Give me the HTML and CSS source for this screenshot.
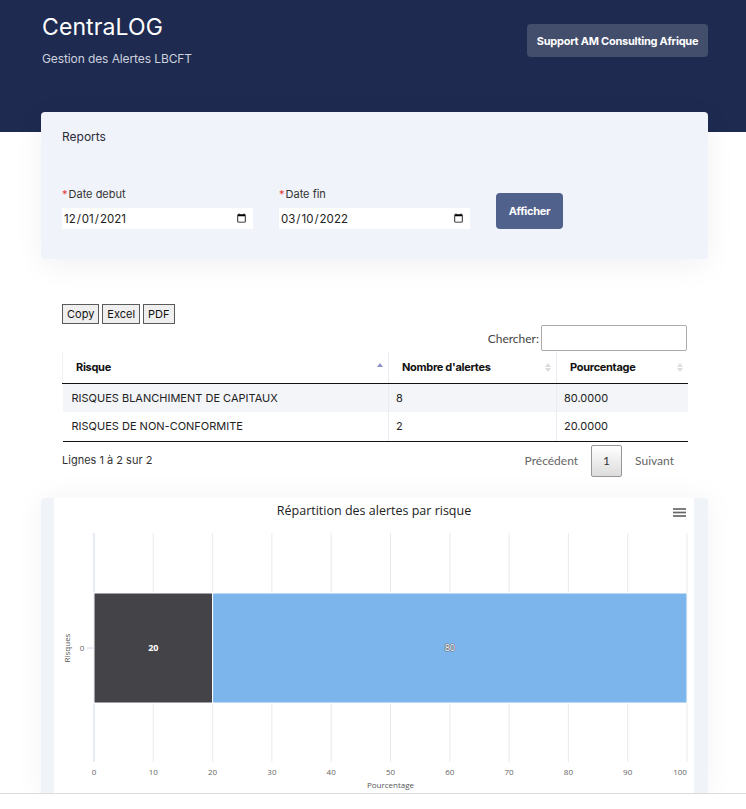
FILE: index.html
```html
<!DOCTYPE html>
<html lang="fr">
<head>
<meta charset="utf-8">
<title>CentraLOG - Reports</title>
<link rel="stylesheet" href="styles.css">
</head>
<body>
<header class="topbar">
  <div class="brand">
    <h1 class="brand-title">CentraLOG</h1>
    <p class="brand-sub">Gestion des Alertes LBCFT</p>
  </div>
  <a class="support-btn" href="#">Support AM Consulting Afrique</a>
</header>

<main class="content">
  <section class="card reports">
    <h2 class="card-title">Reports</h2>
    <form class="filter-row">
      <div class="field">
        <label class="field-label"><span class="req">*</span>Date debut</label>
        <input class="date-input" type="date" value="2021-12-01">
      </div>
      <div class="field">
        <label class="field-label"><span class="req">*</span>Date fin</label>
        <input class="date-input" type="date" value="2022-03-10">
      </div>
      <button class="btn-primary" type="button">Afficher</button>
    </form>
  </section>

  <section class="table-block">
    <div class="dt-buttons">
      <button class="dt-btn" type="button">Copy</button>
      <button class="dt-btn" type="button">Excel</button>
      <button class="dt-btn" type="button">PDF</button>
    </div>
    <div class="dt-search">
      <label class="search-label">Chercher:</label>
      <input class="search-input" type="text">
    </div>
    <table class="dt-table">
      <thead>
        <tr>
          <th class="col-risk"><span>Risque</span><span class="sort active-up"><i class="up"></i><i class="down"></i></span></th>
          <th class="col-count"><span>Nombre d'alertes</span><span class="sort"><i class="up"></i><i class="down"></i></span></th>
          <th class="col-pct"><span>Pourcentage</span><span class="sort"><i class="up"></i><i class="down"></i></span></th>
        </tr>
      </thead>
      <tbody>
        <tr class="odd">
          <td>RISQUES BLANCHIMENT DE CAPITAUX</td>
          <td>8</td>
          <td>80.0000</td>
        </tr>
        <tr>
          <td>RISQUES DE NON-CONFORMITE</td>
          <td>2</td>
          <td>20.0000</td>
        </tr>
      </tbody>
    </table>
    <div class="dt-footer">
      <div class="dt-info">Lignes 1 à 2 sur 2</div>
      <div class="dt-paging">
        <span class="page-link">Précédent</span>
        <span class="page-current">1</span>
        <span class="page-link">Suivant</span>
      </div>
    </div>
  </section>

  <section class="chart-card">
    <div class="chart-inner">
      <svg class="chart-svg" width="640" height="295" viewBox="0 0 640 295">
        <text class="c-title" x="320" y="17" text-anchor="middle">Répartition des alertes par risque</text>
        <g class="c-menu">
          <line x1="619" y1="11" x2="632" y2="11"/>
          <line x1="619" y1="14.5" x2="632" y2="14.5"/>
          <line x1="619" y1="18" x2="632" y2="18"/>
        </g>
        <g class="c-grid">
          <line x1="99.3" y1="35" x2="99.3" y2="264"/>
          <line x1="158.6" y1="35" x2="158.6" y2="264"/>
          <line x1="217.9" y1="35" x2="217.9" y2="264"/>
          <line x1="277.2" y1="35" x2="277.2" y2="264"/>
          <line x1="336.5" y1="35" x2="336.5" y2="264"/>
          <line x1="395.8" y1="35" x2="395.8" y2="264"/>
          <line x1="455.1" y1="35" x2="455.1" y2="264"/>
          <line x1="514.4" y1="35" x2="514.4" y2="264"/>
          <line x1="573.7" y1="35" x2="573.7" y2="264"/>
          <line x1="633" y1="35" x2="633" y2="264"/>
        </g>
        <line class="c-axis" x1="40" y1="35" x2="40" y2="264"/>
        <line class="c-axis" x1="33" y1="150" x2="40" y2="150"/>
        <rect class="bar-dark" x="40" y="95" width="118.6" height="110"/>
        <rect class="bar-blue" x="158.6" y="95" width="474.4" height="110"/>
        <text class="c-lbl-dark" x="99.3" y="153" text-anchor="middle">20</text>
        <text class="c-lbl-blue" x="395.8" y="153" text-anchor="middle">80</text>
        <text class="c-tick" x="28" y="153" text-anchor="middle">0</text>
        <text class="c-axis-title" transform="translate(16 150) rotate(-90)" text-anchor="middle">Risques</text>
        <g class="c-tick">
          <text x="40" y="277" text-anchor="middle">0</text>
          <text x="99.3" y="277" text-anchor="middle">10</text>
          <text x="158.6" y="277" text-anchor="middle">20</text>
          <text x="217.9" y="277" text-anchor="middle">30</text>
          <text x="277.2" y="277" text-anchor="middle">40</text>
          <text x="336.5" y="277" text-anchor="middle">50</text>
          <text x="395.8" y="277" text-anchor="middle">60</text>
          <text x="455.1" y="277" text-anchor="middle">70</text>
          <text x="514.4" y="277" text-anchor="middle">80</text>
          <text x="573.7" y="277" text-anchor="middle">90</text>
          <text x="626" y="277" text-anchor="middle">100</text>
        </g>
        <text class="c-axis-title" x="336.5" y="290" text-anchor="middle">Pourcentage</text>
      </svg>
    </div>
  </section>
</main>
<footer class="page-footer"></footer>
</body>
</html>
```

FILE: styles.css
```css
* { box-sizing: border-box; }

html, body {
  margin: 0;
  padding: 0;
  background: #ffffff;
}

body {
  font-family: Inter, "Noto Sans", Arial, sans-serif;
  color: #222;
  width: 746px;
  overflow: hidden;
}

/* Header */
.topbar {
  height: 132px;
  background: #1e2a50;
  display: flex;
  justify-content: space-between;
  align-items: flex-start;
  padding: 0 38px 0 42px;
}

.brand { padding-top: 13px; }

.brand-title {
  margin: 0;
  font-size: 23px;
  line-height: 28px;
  font-weight: 400;
  color: #ffffff;
  letter-spacing: 0.1px;
}

.brand-sub {
  margin: 10px 0 0;
  font-size: 12px;
  line-height: 16px;
  color: #cdd2de;
  letter-spacing: -0.1px;
}

.support-btn {
  margin-top: 24px;
  height: 33px;
  width: 181px;
  display: flex;
  align-items: center;
  justify-content: center;
  background: #434e6c;
  color: #ffffff;
  font-size: 11px;
  font-weight: 700;
  letter-spacing: -0.25px;
  white-space: nowrap;
  text-decoration: none;
  border-radius: 4px;
}

/* Content */
.content {
  padding: 0 38px 0 41px;
}

.card {
  background: #f0f3f9;
  border-radius: 4px;
  box-shadow: 0 6px 30px rgba(0, 0, 0, 0.06);
}

.reports {
  margin-top: -20px;
  height: 147px;
  padding: 16px 21px 0;
  position: relative;
}

.card-title {
  margin: 0;
  font-size: 12px;
  line-height: 18px;
  font-weight: 400;
  color: #2a2a3a;
}

.filter-row {
  margin: 40px 0 0;
  display: flex;
  align-items: flex-end;
  gap: 26px;
}

.field {
  width: 191px;
  display: flex;
  flex-direction: column;
  gap: 6px;
}

.field-label {
  font-size: 11px;
  line-height: 16px;
  color: #333;
}

.req {
  color: #e53935;
  margin-right: 1px;
}

.date-input {
  height: 21px;
  width: 191px;
  border: none;
  background: #ffffff;
  padding: 0 4px 0 1px;
  font-family: Inter, "Noto Sans", Arial, sans-serif;
  font-size: 11.5px;
  color: #222;
  outline: none;
}

.btn-primary {
  width: 67px;
  height: 36px;
  border: none;
  border-radius: 4px;
  background: #50628c;
  color: #ffffff;
  font-family: Inter, "Noto Sans", Arial, sans-serif;
  font-size: 11px;
  font-weight: 700;
  letter-spacing: -0.3px;
  padding: 0;
}

/* Table block */
.table-block {
  margin: 45px 21px 0 21px;
}

.dt-buttons {
  display: flex;
  gap: 3px;
  height: 19px;
}

.dt-btn {
  height: 20px;
  padding: 0 4px;
  border: 1px solid #5a5a5a;
  background: #efefef;
  font-family: Inter, "Noto Sans", Arial, sans-serif;
  font-size: 11px;
  color: #111;
  border-radius: 0;
  line-height: 18px;
}

.dt-search {
  margin-top: 2px;
  display: flex;
  justify-content: flex-end;
  align-items: center;
  gap: 2px;
  height: 26px;
}

.search-label {
  font-family: Lato, Inter, sans-serif;
  font-size: 12px;
  color: #444;
}

.search-input {
  width: 146px;
  height: 26px;
  border: 1px solid #aaaaaa;
  border-radius: 2px;
  background: #fff;
}

.dt-table {
  width: 625px;
  border-collapse: collapse;
  margin-top: 1px;
  table-layout: fixed;
}

.dt-table th {
  height: 31px;
  text-align: left;
  font-size: 11px;
  font-weight: 700;
  letter-spacing: -0.3px;
  color: #111;
  padding: 0 6px 0 13px;
  border-bottom: 1px solid #111;
  border-left: 1px solid #e9edf3;
  position: relative;
}

.dt-table th:first-child { border-left: 1px solid #eef1f5; }

.col-risk { width: 326px; }
.col-count { width: 168px; }
.col-pct { width: 131px; }

.sort {
  position: absolute;
  right: 5px;
  top: 11px;
  display: flex;
  flex-direction: column;
  gap: 1px;
}

.sort i {
  display: block;
  width: 0;
  height: 0;
  border-left: 3px solid transparent;
  border-right: 3px solid transparent;
}

.sort .up { border-bottom: 4px solid #dcdcdc; }
.sort .down { border-top: 4px solid #dcdcdc; }
.sort.active-up .up { border-bottom-color: #8d8fc8; }
.sort.active-up .down { border-top-color: transparent; }

.dt-table td {
  height: 29px;
  font-size: 11px;
  color: #222;
  padding: 0 7px;
  border-left: 1px solid #e9edf3;
}

.dt-table td:first-child { border-left: none; padding-left: 9px; }

.dt-table tbody tr.odd { background: #f3f5f9; }

.dt-table tbody tr:last-child td { border-bottom: 1px solid #111; }

.dt-footer {
  margin-top: 3px;
  display: flex;
  justify-content: space-between;
  align-items: center;
  height: 32px;
}

.dt-info {
  font-size: 11px;
  color: #333;
  margin-top: -1px;
}

.dt-paging {
  display: flex;
  align-items: center;
  font-family: Lato, Inter, sans-serif;
  font-size: 12px;
  color: #666;
}

.page-link { padding: 0 13px; }

.page-current {
  width: 31px;
  height: 32px;
  display: flex;
  align-items: center;
  justify-content: center;
  border: 1px solid #979797;
  border-radius: 2px;
  background: linear-gradient(#ffffff, #dcdcdc);
  color: #333;
}

/* Chart */
.chart-card {
  margin-top: 21px;
  height: 295px;
  background: #f0f4f9;
  border-radius: 4px 4px 0 0;
  padding: 0 14px 0 13px;
  box-shadow: 0 0 30px rgba(0, 0, 0, 0.05);
}

.chart-inner {
  background: #ffffff;
  height: 295px;
  width: 640px;
}

.chart-svg { display: block; }

.c-title {
  font-family: "Open Sans", "DejaVu Sans", sans-serif;
  font-size: 12.5px;
  fill: #222222;
}

.c-menu line {
  stroke: #666666;
  stroke-width: 1.7;
}

.c-grid line {
  stroke: #eaeaea;
  stroke-width: 1;
}

.c-axis {
  stroke: #ccd6eb;
  stroke-width: 1;
}

.bar-dark {
  fill: #434348;
  stroke: #ffffff;
  stroke-width: 1;
}

.bar-blue {
  fill: #7cb5ec;
  stroke: #ffffff;
  stroke-width: 1;
}

.c-lbl-dark {
  font-family: "Open Sans", "DejaVu Sans", sans-serif;
  font-size: 9px;
  font-weight: 700;
  fill: #ffffff;
}

.c-lbl-blue {
  font-family: "Open Sans", "DejaVu Sans", sans-serif;
  font-size: 9px;
  fill: #ffffff;
  stroke: #6b6b6b;
  stroke-width: 1.2px;
  paint-order: stroke;
  stroke-linejoin: round;
}

.c-tick, .c-tick text {
  font-family: "Open Sans", "DejaVu Sans", sans-serif;
  font-size: 8px;
  fill: #666666;
}

.c-axis-title {
  font-family: "Open Sans", "DejaVu Sans", sans-serif;
  font-size: 8px;
  fill: #555555;
}

.page-footer {
  border-top: 1px solid #dcdcdc;
  height: 20px;
  background: #fff;
}
```
